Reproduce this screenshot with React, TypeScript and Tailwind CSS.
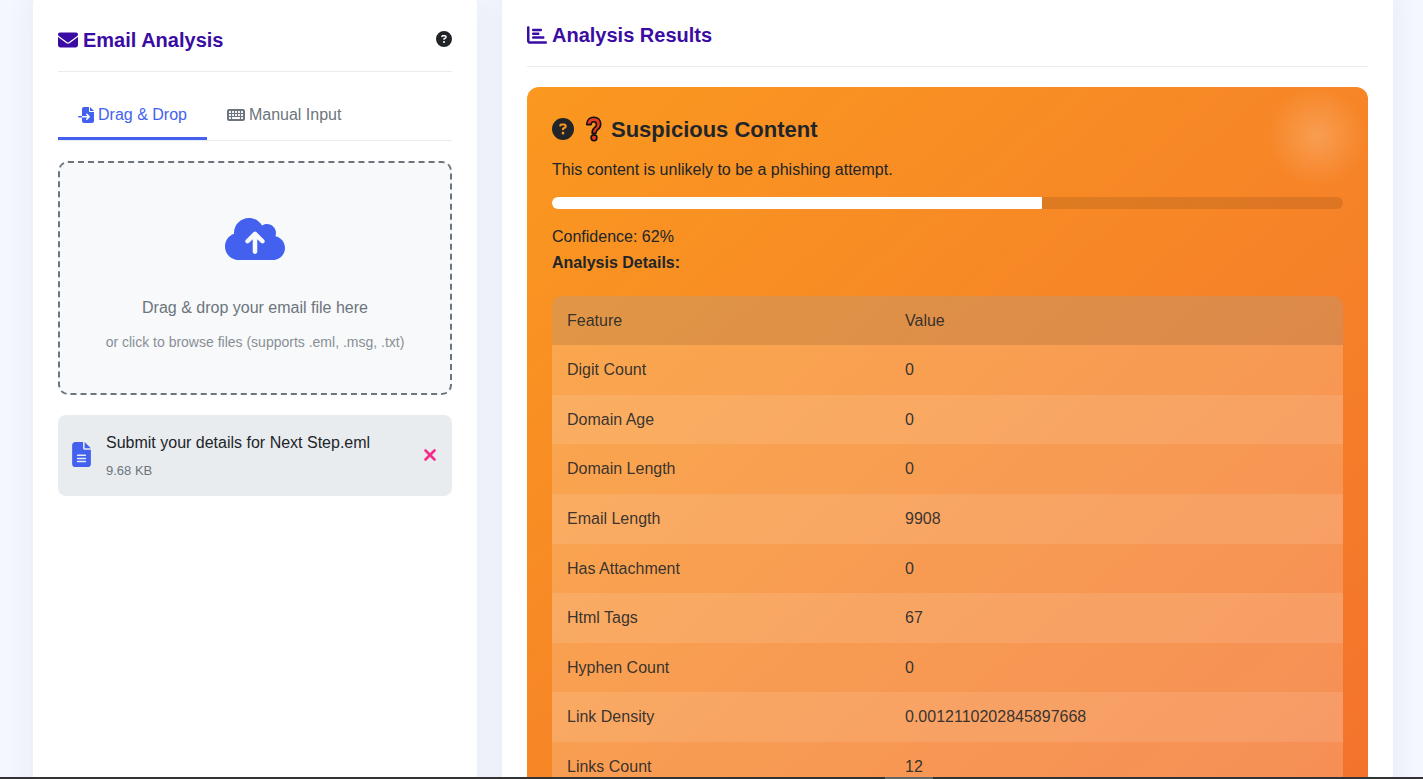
import { FaChartBar, FaCircleQuestion, FaCloudArrowUp, FaEnvelope, FaFileImport, FaFileLines, FaKeyboard, FaXmark } from "react-icons/fa6";

const rows = [
  ["Digit Count", "0"],
  ["Domain Age", "0"],
  ["Domain Length", "0"],
  ["Email Length", "9908"],
  ["Has Attachment", "0"],
  ["Html Tags", "67"],
  ["Hyphen Count", "0"],
  ["Link Density", "0.0012110202845897668"],
  ["Links Count", "12"],
];

export default function App() {
  return (
    <div className="relative h-[779px] overflow-hidden bg-[#f4f7ff] font-['Liberation_Sans',Arial,sans-serif] text-[16px] text-[#212529]">
      <div className="flex items-start gap-[25px] pl-[33px]">
        {/* left panel */}
        <div className="-mt-[10px] h-[830px] w-[444px] shrink-0 rounded-[15px] bg-white px-[25px] pt-[25px] shadow-[0_5px_30px_rgba(30,40,60,0.07)]">
          <div className="flex h-[57px] items-start justify-between border-b border-[#e9ecef] pt-[12px]">
            <h2 className="flex items-center gap-[5px] text-[20px] leading-[26px] font-bold text-[#3a0ca3]">
              <FaEnvelope className="text-[20px]" />
              Email Analysis
            </h2>
            <FaCircleQuestion className="mt-[4px] text-[16px] text-[#212529]" />
          </div>

          <div className="mt-[20px] flex h-[49px] border-b border-[#e9ecef]">
            <div className="flex h-[48px] items-center gap-[4px] border-b-[3px] border-[#4361ee] px-[20px] pt-[1px] text-[#4361ee]">
              <FaFileImport className="text-[16px]" />
              Drag &amp; Drop
            </div>
            <div className="flex h-[48px] items-center gap-[4px] px-[20px] pb-[2px] text-[#6c757d]">
              <FaKeyboard className="text-[18px]" />
              Manual Input
            </div>
          </div>

          <div className="mt-[20px] flex h-[234px] flex-col items-center rounded-[10px] border-2 border-dashed border-[#6c757d] bg-[#f8f9fa] pt-[46px]">
            <FaCloudArrowUp className="text-[60px] text-[#4361ee]" />
            <p className="mt-[27px] text-[#6c757d]">Drag &amp; drop your email file here</p>
            <p className="mt-[12px] text-[14px] text-[#6c757d] opacity-80">or click to browse files (supports .eml, .msg, .txt)</p>
          </div>

          <div className="mt-[20px] flex h-[81px] items-center rounded-[8px] bg-[#e9ecef] pr-[13px] pl-[14px]">
            <FaFileLines className="mb-[3px] h-[25px] w-[19px] text-[#4361ee]" />
            <div className="ml-[15px] min-w-0 flex-1">
              <div className="leading-[24px]">Submit your details for Next Step.eml</div>
              <div className="mt-[6px] text-[13px] leading-[20px] text-[#6c757d]">9.68 KB</div>
            </div>
            <FaXmark className="mb-[1px] stroke-[15px] text-[18px] text-[#f72585]" />
          </div>
        </div>

        {/* right panel */}
        <div className="-mt-[15px] h-[830px] w-[891px] shrink-0 rounded-[15px] bg-white px-[25px] pt-[25px] shadow-[0_5px_30px_rgba(30,40,60,0.07)]">
          <div className="flex h-[57px] items-start border-b border-[#e9ecef] pt-[12px]">
            <h2 className="flex items-center gap-[5px] text-[20px] leading-[26px] font-bold text-[#3a0ca3]">
              <FaChartBar className="text-[20px]" />
              Analysis Results
            </h2>
          </div>

          <div className="relative mt-[20px] h-[720px] overflow-hidden rounded-[12px] bg-gradient-to-br from-[#fa981f] to-[#f3722c] px-[25px] pt-[25px]">
            <div className="absolute top-[-1px] right-[1px] h-[100px] w-[100px] rounded-full bg-[radial-gradient(circle,rgba(255,255,255,0.2)_0%,rgba(255,255,255,0)_70%)]" />
            <h3 className="flex h-[36px] items-center pb-[2px] text-[22px] font-bold">
              <FaCircleQuestion className="text-[22px]" />
              <svg viewBox="0 0 18 26" className="mr-[8px] ml-[10px] h-[26px] w-[19px]">
                <path d="M2.2 8.600C2.200 4.200 5 1.200 9.200 1.200s7 2.800 7 7c0 2.800-1.400 4.300-3.200 5.700-1.200.900-1.500 1.600-1.500 3.400H7.600c0-2.900.700-4.400 2.400-5.700 1.300-1 1.900-1.800 1.900-3.200 0-1.600-1-2.600-2.600-2.600S6.600 6.900 6.600 8.600z" fill="#e8391d" stroke="#111" strokeWidth="1.600" strokeLinejoin="round" />
                <circle cx="9.500" cy="21.800" r="2.900" fill="#e8391d" stroke="#111" strokeWidth="1.600" />
              </svg>
              Suspicious Content
            </h3>
            <p className="mt-[10px] leading-[24px]">This content is unlikely to be a phishing attempt.</p>
            <div className="mt-[15px] h-[12px] overflow-hidden rounded-[6px] bg-black/10">
              <div className="h-full w-[62%] bg-white" />
            </div>
            <p className="mt-[16px] leading-[24px]">Confidence: 62%</p>
            <p className="mt-[2px] leading-[24px] font-bold">Analysis Details:</p>

            <div className="mt-[20.600px] overflow-hidden rounded-[10px] bg-white/20">
              <table className="w-full table-fixed border-collapse text-left leading-[25.6px] text-[#212529]/90">
                <thead>
                  <tr className="bg-black/10">
                    <th className="w-[338px] px-[15px] py-[12px] font-normal">Feature</th>
                    <th className="px-[15px] py-[12px] font-normal">Value</th>
                  </tr>
                </thead>
                <tbody>
                  {rows.map(([name, value], i) => (
                    <tr key={name} className={i % 2 === 1 ? "bg-white/10" : ""}>
                      <td className="px-[15px] py-[12px]">{name}</td>
                      <td className="px-[15px] py-[12px]">{value}</td>
                    </tr>
                  ))}
                </tbody>
              </table>
            </div>
          </div>
        </div>
      </div>

      {/* window edge at the bottom of the capture */}
      <div className="absolute right-0 bottom-0 left-0 h-[2px] bg-[#333333]">
        <div className="absolute top-0 left-[885px] h-[2px] w-[48px] bg-[#666666]" />
      </div>
    </div>
  );
}
